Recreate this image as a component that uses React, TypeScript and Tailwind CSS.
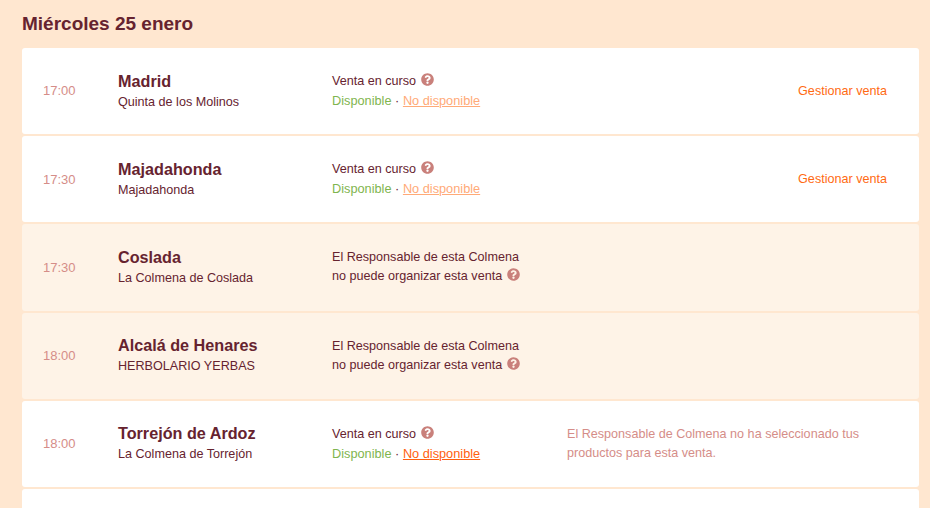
import { FaQuestionCircle } from "react-icons/fa";

type Sale = {
  time: string;
  city: string;
  hive: string;
  blocked?: boolean;
  manage?: boolean;
  linkActive?: boolean;
  note?: boolean;
};

const sales: Sale[] = [
  { time: "17:00", city: "Madrid", hive: "Quinta de los Molinos", manage: true },
  { time: "17:30", city: "Majadahonda", hive: "Majadahonda", manage: true },
  { time: "17:30", city: "Coslada", hive: "La Colmena de Coslada", blocked: true },
  { time: "18:00", city: "Alcalá de Henares", hive: "HERBOLARIO YERBAS", blocked: true },
  { time: "18:00", city: "Torrejón de Ardoz", hive: "La Colmena de Torrejón", linkActive: true, note: true },
];

function SaleRow({ sale }: { sale: Sale }) {
  return (
    <div
      className={`flex items-center h-[86.2px] shrink-0 rounded-[3px] ${
        sale.blocked ? "bg-[#fef3e7]" : "bg-white"
      }`}
    >
      <div className="w-[96px] pl-[21px] text-[13px] text-[#d58d88]">{sale.time}</div>
      <div className="w-[214px] mb-[1px]">
        <div className="text-[16.2px] leading-[22px] font-bold text-[#66232f]">{sale.city}</div>
        <div className="text-[12.6px] leading-[19px] mt-[1px] text-[#66232f]">{sale.hive}</div>
      </div>
      <div className="w-[235px] text-[12.6px] leading-[19px] text-[#66232f]">
        {sale.blocked ? (
          <>
            <div>El Responsable de esta Colmena</div>
            <div className="flex items-center gap-[5px]">
              no puede organizar esta venta
              <FaQuestionCircle className="w-[13px] h-[13px] mb-[4px] text-[#c9807b]" />
            </div>
          </>
        ) : (
          <>
            <div className="flex items-center gap-[5px]">
              Venta en curso
              <FaQuestionCircle className="w-[13px] h-[13px] mb-[4px] text-[#c9807b]" />
            </div>
            <div className="text-[12.75px]">
              <span className="text-[#7fb54f]">Disponible</span> ·{" "}
              <span className={`underline ${sale.linkActive ? "text-[#ff5f0f]" : "text-[#ffaa78]"}`}>
                No disponible
              </span>
            </div>
          </>
        )}
      </div>
      {sale.note && (
        <div className="w-[330px] mt-[1px] text-[12.6px] leading-[19.5px] text-[#d58d88]">
          El Responsable de Colmena no ha seleccionado tus productos para esta venta.
        </div>
      )}
      {sale.manage && (
        <div className="ml-auto pr-[32px] text-[12.6px] text-[#ff6a13]">Gestionar venta</div>
      )}
    </div>
  );
}

export default function App() {
  return (
    <div className="h-[508px] overflow-hidden bg-[#ffe7d0] pl-[22px] pr-[11px] pt-[13px] font-['Liberation_Sans',Arial,sans-serif]">
      <h2 className="text-[19px] leading-[22px] font-bold text-[#66232f] mb-[13px]">Miércoles 25 enero</h2>
      <div className="flex flex-col gap-[2px]">
        {sales.map((sale) => (
          <SaleRow key={sale.city} sale={sale} />
        ))}
        <div className="h-[86px] shrink-0 rounded-[3px] bg-white" />
      </div>
    </div>
  );
}
